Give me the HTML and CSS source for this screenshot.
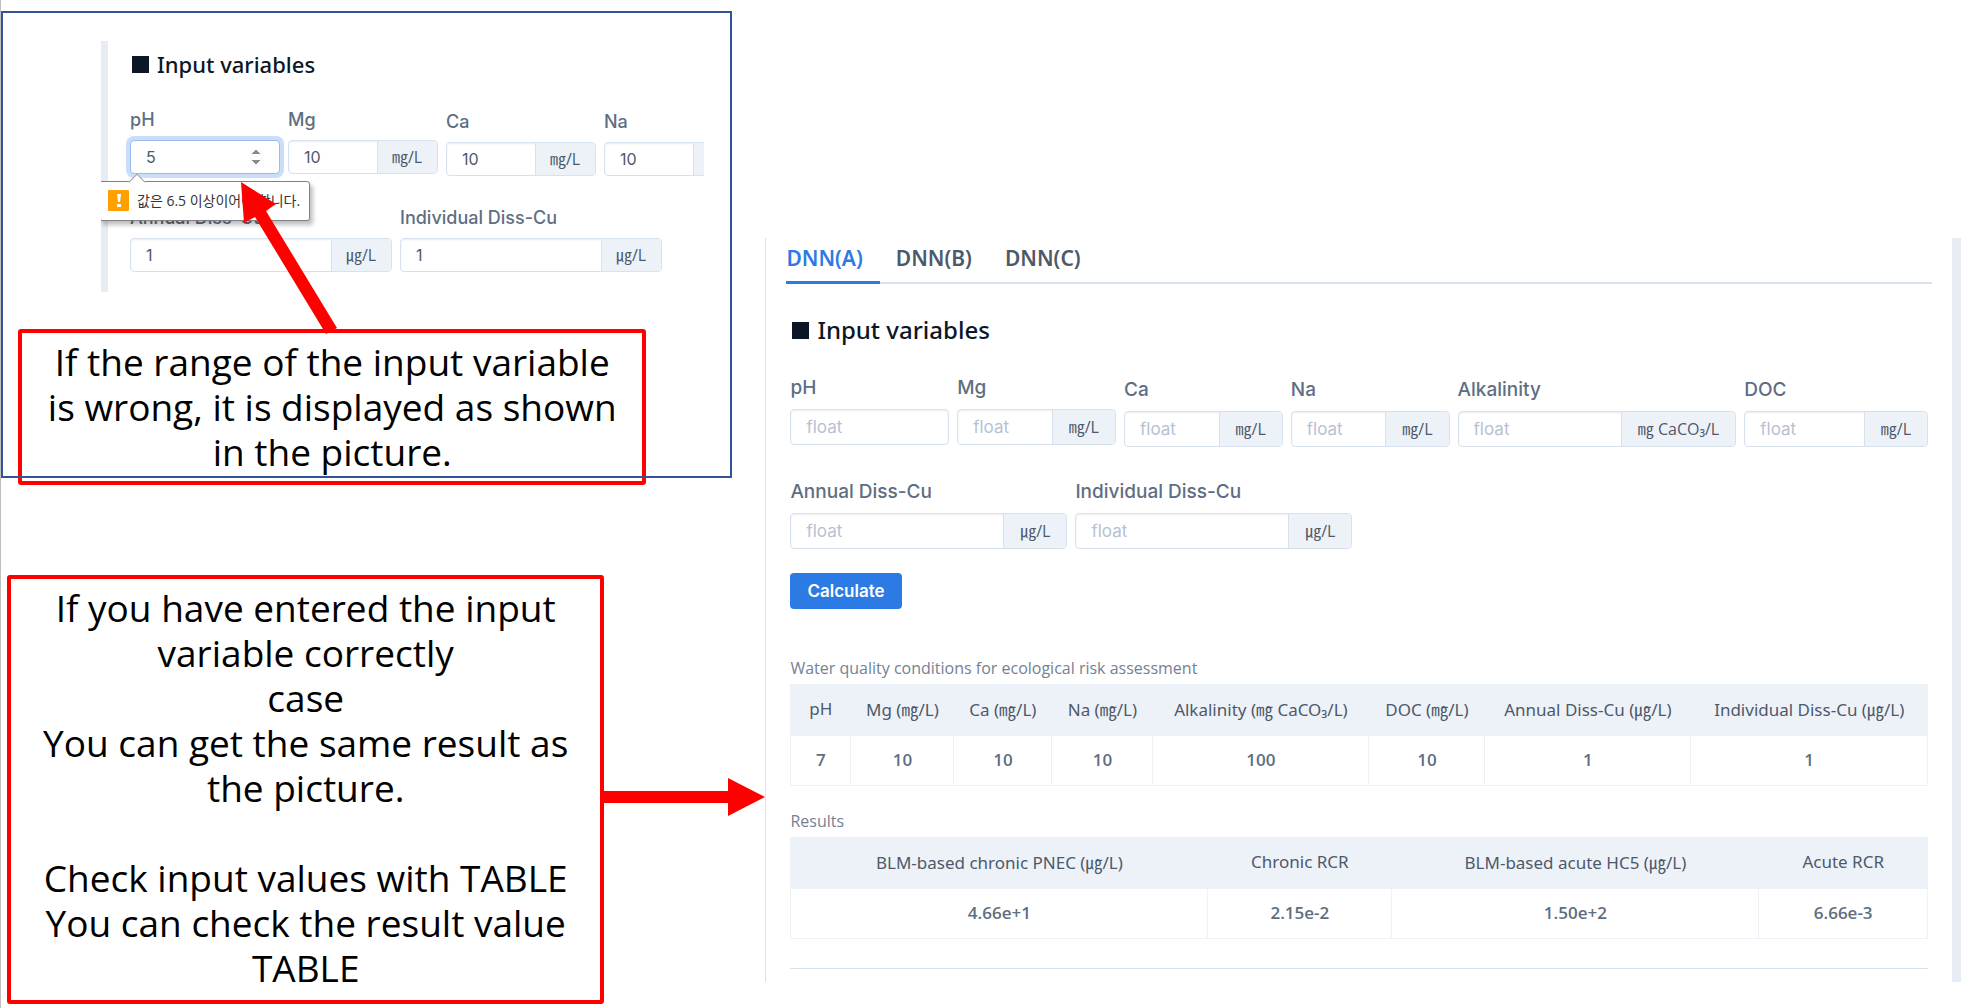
FILE: index.html
```html
<!DOCTYPE html>
<html lang="en">
<head>
<meta charset="utf-8">
<title>DNN input guide</title>
<link rel="stylesheet" href="styles.css">
</head>
<body>
<main class="page">
  <div class="guide">
    <section class="frame">
      <div class="card">
        <h2 class="heading heading-small"><span class="square"></span>Input variables</h2>
        <div class="row row-small">
          <div class="field">
            <label for="s-ph">pH</label>
            <div class="group group-focus"><input id="s-ph" class="number" type="number" value="5"></div>
          </div>
          <div class="field">
            <label for="s-mg">Mg</label>
            <div class="group"><input id="s-mg" type="text" value="10"><span class="unit">㎎/L</span></div>
          </div>
          <div class="field lowered">
            <label for="s-ca">Ca</label>
            <div class="group"><input id="s-ca" type="text" value="10"><span class="unit">㎎/L</span></div>
          </div>
          <div class="field lowered">
            <label for="s-na">Na</label>
            <div class="group"><input id="s-na" type="text" value="10"><span class="unit" aria-label="㎎/L"></span></div>
          </div>
        </div>
        <div class="row row-small row-small-cu">
          <div class="field">
            <label for="s-annual">Annual Diss-Cu</label>
            <div class="group"><input id="s-annual" type="text" value="1"><span class="unit">㎍/L</span></div>
          </div>
          <div class="field">
            <label for="s-individual">Individual Diss-Cu</label>
            <div class="group"><input id="s-individual" type="text" value="1"><span class="unit">㎍/L</span></div>
          </div>
        </div>
        <div class="tooltip" lang="ko">
          <svg class="warn" viewBox="0 0 21 21" aria-hidden="true"><rect width="21" height="21" rx="1" fill="#ff9f00"/><path d="M9 4h4l-1 8h-2z" fill="#fff"/><rect x="9" y="14" width="4" height="3" fill="#fff"/></svg>
          <span>값은 6.5 이상이어야 합니다.</span>
        </div>
      </div>
      <p class="note note-range">If the range of the input variable<br>is wrong, it is displayed as shown<br>in the picture.</p>
      <svg class="arrow-up" viewBox="0 0 100 156" aria-hidden="true"><polygon points="1,1 36,23 26,30 97,147 86,153 15,36 4,42" fill="#f00"/></svg>
    </section>
    <section class="result-note">
      <p class="note">If you have entered the input<br>variable correctly<br>case<br>You can get the same result as<br>the picture.<br><br>Check input values with TABLE<br>You can check the result value<br>TABLE</p>
      <svg class="arrow-right" viewBox="0 0 162 38" aria-hidden="true"><polygon points="0,13 125,13 125,0 162,19 125,38 125,25 0,25" fill="#f00"/></svg>
    </section>
  </div>

  <section class="panel">
    <nav class="tabs">
      <a class="tab active" href="#a">DNN(A)</a>
      <a class="tab" href="#b">DNN(B)</a>
      <a class="tab" href="#c">DNN(C)</a>
    </nav>
    <form class="content">
      <h2 class="heading"><span class="square"></span>Input variables</h2>
      <div class="row row-main">
        <div class="field">
          <label for="ph">pH</label>
          <div class="group"><input id="ph" type="text" placeholder="float"></div>
        </div>
        <div class="field">
          <label for="mg">Mg</label>
          <div class="group"><input id="mg" type="text" placeholder="float"><span class="unit">㎎/L</span></div>
        </div>
        <div class="field lowered">
          <label for="ca">Ca</label>
          <div class="group"><input id="ca" type="text" placeholder="float"><span class="unit">㎎/L</span></div>
        </div>
        <div class="field lowered">
          <label for="na">Na</label>
          <div class="group"><input id="na" type="text" placeholder="float"><span class="unit">㎎/L</span></div>
        </div>
        <div class="field lowered">
          <label for="alk">Alkalinity</label>
          <div class="group"><input id="alk" type="text" placeholder="float"><span class="unit">㎎ CaCO₃/L</span></div>
        </div>
        <div class="field lowered">
          <label for="doc">DOC</label>
          <div class="group"><input id="doc" type="text" placeholder="float"><span class="unit">㎎/L</span></div>
        </div>
      </div>
      <div class="row row-cu">
        <div class="field">
          <label for="annual">Annual Diss-Cu</label>
          <div class="group"><input id="annual" type="text" placeholder="float"><span class="unit">㎍/L</span></div>
        </div>
        <div class="field">
          <label for="individual">Individual Diss-Cu</label>
          <div class="group"><input id="individual" type="text" placeholder="float"><span class="unit">㎍/L</span></div>
        </div>
      </div>
      <button class="calculate" type="button">Calculate</button>

      <table class="data conditions">
        <caption>Water quality conditions for ecological risk assessment</caption>
        <colgroup><col class="c-ph"><col class="c-mg"><col class="c-ca"><col class="c-na"><col class="c-alk"><col class="c-doc"><col class="c-annual"><col></colgroup>
        <thead><tr><th>pH</th><th>Mg (㎎/L)</th><th>Ca (㎎/L)</th><th>Na (㎎/L)</th><th>Alkalinity (㎎ CaCO₃/L)</th><th>DOC (㎎/L)</th><th>Annual Diss-Cu (㎍/L)</th><th>Individual Diss-Cu (㎍/L)</th></tr></thead>
        <tbody><tr><td>7</td><td>10</td><td>10</td><td>10</td><td>100</td><td>10</td><td>1</td><td>1</td></tr></tbody>
      </table>
      <table class="data results">
        <caption>Results</caption>
        <colgroup><col class="c-pnec"><col class="c-rcr"><col class="c-hc5"><col></colgroup>
        <thead><tr><th>BLM-based chronic PNEC (㎍/L)</th><th>Chronic RCR</th><th>BLM-based acute HC5 (㎍/L)</th><th>Acute RCR</th></tr></thead>
        <tbody><tr><td>4.66e+1</td><td>2.15e-2</td><td>1.50e+2</td><td>6.66e-3</td></tr></tbody>
      </table>
      <hr class="rule">
    </form>
  </section>
</main>
</body>
</html>
```
FILE: styles.css
```css
* { box-sizing: border-box; }

body {
  margin: 0;
  background: #fff;
  color: #5e6e82;
  font-family: "Open Sans", "Noto Sans CJK KR", sans-serif;
  font-size: 16px;
}

.page {
  display: flex;
  align-items: flex-start;
  min-height: 100vh;
  padding-right: 24px;
  border-left: 1px solid #bfbfbf;
}

/* Left side: annotated example */
.guide {
  flex: 0 0 39%;
  min-width: 0;
}

.frame {
  position: relative;
  display: flow-root;
  margin: 11px 33px 0 0;
  padding-top: 30px;
}

.frame::after {
  content: "";
  position: absolute;
  inset: 0;
  border: 2px solid #2f5597;
  pointer-events: none;
}

.card {
  position: relative;
  height: 251px;
  margin: 0 28px 0 100px;
  padding: 7px 0 0 29px;
  overflow: hidden;
}

.card::before {
  content: "";
  position: absolute;
  inset: 0 auto 0 0;
  width: 7px;
  background: #e6ebf4;
}

.heading {
  display: flex;
  align-items: center;
  gap: 8px;
  margin: 30px 0 0;
  padding-left: 2px;
  color: #0b1727;
  font: 500 24px/32px "Noto Sans", sans-serif;
}

.heading-small {
  margin: 0;
  font-size: 22px;
  line-height: 32px;
}

.square {
  width: 17px;
  height: 17px;
  background: #0b1727;
}

.row {
  display: grid;
  gap: 8px;
}

.row-main {
  grid-template-columns: 159fr 159fr 159fr 159fr 279fr 184fr;
  margin-top: 30px;
}

.row-cu {
  grid-template-columns: 277px 277px;
  margin-top: 33px;
}

.row-small {
  grid-template-columns: repeat(4, 150px);
  margin-top: 28px;
}

.row-small-cu {
  grid-template-columns: 262px 262px;
  margin-top: 30px;
}

.lowered { padding-top: 2px; }

.field label {
  display: block;
  margin-bottom: 9px;
  font: 500 19px/24px Inter, sans-serif;
  white-space: nowrap;
}

.row-small label {
  margin-bottom: 8px;
  font-size: 18px;
}

.group {
  display: flex;
  height: 36px;
  border: 1px solid #d8e2ef;
  border-radius: 4px;
  background: #fff;
  box-shadow: inset 0 1px 2px rgba(0, 0, 0, .08);
}

.group input {
  flex: 1;
  width: 0;
  min-width: 0;
  padding: 0 15px;
  border: 0;
  outline: 0;
  background: transparent;
  color: #4d5969;
  font: 400 17px Inter, sans-serif;
}

.group input::placeholder { color: #b6c1d2; opacity: 1; }

.unit {
  min-width: 60px;
  padding: 0 16px;
  border-left: 1px solid #d8e2ef;
  border-radius: 0 3px 3px 0;
  background: #edf2f9;
  color: #4d5969;
  line-height: 34px;
  white-space: nowrap;
}

.row-small .group { height: 34px; }
.row-small .group input { font-size: 16px; }
.row-small .unit { padding: 0 14px; line-height: 32px; }

.row-small .group-focus {
  border-color: #96bdf2;
  box-shadow: 0 0 0 4px #cadef9;
}

.number::-webkit-inner-spin-button { opacity: 1; }

/* Validation bubble */
.tooltip {
  position: absolute;
  top: 140px;
  left: -2px;
  display: flex;
  align-items: center;
  gap: 8px;
  width: 211px;
  height: 40px;
  padding: 0 0 2px 8px;
  border: 1px solid #808080;
  border-radius: 3px;
  background: #fff;
  box-shadow: 3px 4px 4px rgba(0, 0, 0, .25);
  color: #333;
  font-size: 14px;
  white-space: nowrap;
}

.tooltip::before {
  content: "";
  position: absolute;
  top: -6px;
  left: 31px;
  width: 11px;
  height: 11px;
  border: solid #a0a0a0;
  border-width: 1px 0 0 1px;
  background: #fff;
  transform: rotate(45deg);
}

.warn { width: 21px; height: 21px; }

/* Red call-outs */
.note {
  margin: 0;
  padding: 6px 0 10px;
  border: 4px solid #f00;
  border-radius: 3px;
  background: #fff;
  color: #000;
  font-size: 37px;
  line-height: 45px;
  text-align: center;
  white-space: nowrap;
}

.note-range {
  margin: 37px 86px -7px 17px;
  padding-bottom: 7px;
}

.arrow-up {
  position: absolute;
  top: 170px;
  left: 239px;
  width: 100px;
  height: 156px;
}

.result-note {
  position: relative;
  margin-top: 97px;
  padding: 0 161px 0 6px;
}

.arrow-right {
  position: absolute;
  top: 203px;
  right: 0;
  width: 162px;
  height: 38px;
}

/* Right side: calculator */
.panel {
  flex: 1;
  min-width: 0;
  margin-top: 238px;
  padding: 0 20px 13px;
  border-left: 1px solid #d8e2ef;
  border-right: 9px solid #e6ebf4;
}

.tabs {
  display: flex;
  gap: 16px;
  box-shadow: inset 0 -2px #d8e2ef;
}

.tab {
  padding: 0 17px 3px 0;
  border-bottom: 3px solid transparent;
  color: #4d5969;
  font: 600 21px/40px "Noto Sans", sans-serif;
  text-decoration: none;
}

.tab.active { border-color: #2c7be5; color: #2c7be5; }

.content { margin: 0 4px; }

.calculate {
  display: block;
  height: 36px;
  margin-top: 24px;
  padding: 0 17px;
  border: 0;
  border-radius: 4px;
  background: #2c7be5;
  color: #fff;
  font: 600 17px Inter, sans-serif;
}

.data {
  width: 100%;
  table-layout: fixed;
  border-collapse: collapse;
  text-align: center;
  white-space: nowrap;
}

.conditions { margin-top: 47px; }
.results { margin-top: 23px; }

.data caption {
  padding-bottom: 4px;
  color: #748194;
  line-height: 24px;
  text-align: left;
}

.data th,
.data td {
  height: 51px;
  padding: 0 0 3px;
  border: 1px solid #edf2f9;
  font-size: 17px;
}

.data th {
  background: #edf2f9;
  color: #4d5969;
  font-family: "Noto Sans", "Noto Sans CJK KR", sans-serif;
  font-weight: 400;
}

.data td {
  height: 50px;
  font-weight: 600;
}

.c-ph { width: 60px; }
.c-mg { width: 103px; }
.c-ca { width: 98px; }
.c-na { width: 101px; }
.c-alk { width: 216px; }
.c-doc { width: 116px; }
.c-annual { width: 206px; }
.c-pnec { width: 417px; }
.c-rcr { width: 184px; }
.c-hc5 { width: 367px; }

.rule {
  margin: 29px 0 0;
  border: 0;
  border-top: 1px solid #d8e2ef;
}
```
